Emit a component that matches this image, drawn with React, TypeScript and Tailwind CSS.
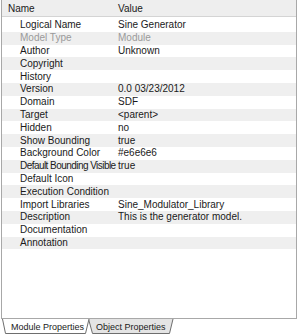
const ROWS: { name: string; value: string; muted?: boolean; tight?: boolean }[] = [
  { name: "Logical Name", value: "Sine Generator" },
  { name: "Model Type", value: "Module", muted: true },
  { name: "Author", value: "Unknown" },
  { name: "Copyright", value: "" },
  { name: "History", value: "" },
  { name: "Version", value: "0.0 03/23/2012" },
  { name: "Domain", value: "SDF" },
  { name: "Target", value: "<parent>" },
  { name: "Hidden", value: "no" },
  { name: "Show Bounding", value: "true" },
  { name: "Background Color", value: "#e6e6e6" },
  { name: "Default Bounding Visible", value: "true", tight: true },
  { name: "Default Icon", value: "" },
  { name: "Execution Condition", value: "" },
  { name: "Import Libraries", value: "Sine_Modulator_Library" },
  { name: "Description", value: "This is the generator model." },
  { name: "Documentation", value: "" },
  { name: "Annotation", value: "" },
];

export default function App() {
  return (
    <div className="w-[300px] h-[335px] bg-white text-[10px] leading-none text-[#1a1a1a] font-['Liberation_Sans',Arial,sans-serif] flex flex-col overflow-hidden">
      {/* Property grid */}
      <div className="ml-[1px] w-[296px] h-[319px] border-l border-r border-b border-[#a8a8a8] flex flex-col">
        {/* Header */}
        <div className="h-[17px] pt-[1px] flex items-center bg-[#eeeeee] border-b border-[#d4d4d4] shrink-0">
          <div className="w-[116px] pl-[6px]">Name</div>
          <div className="flex-1">Value</div>
        </div>
        <div className="h-[2px] shrink-0" />
        {ROWS.map((r, i) => (
          <div
            key={r.name}
            className={`h-[12.8px] flex items-center shrink-0 ${i % 2 === 1 ? "bg-[#efefef]" : "bg-white"} ${r.muted ? "text-[#9a9a9a]" : ""}`}
          >
            <div className={`w-[116px] pl-[18px] whitespace-nowrap ${r.tight ? "tracking-[-0.55px]" : ""}`}>{r.name}</div>
            <div className="flex-1 whitespace-nowrap">{r.value}</div>
          </div>
        ))}
      </div>

      {/* Tabs */}
      <div className="relative h-[15px] flex text-[9px]">
        <svg className="absolute inset-0" width="300" height="15" viewBox="0 0 300 15">
          <path d="M88.5 0 L92.5 14.5 L169.5 14.5 L173 0" fill="#e4e4e4" stroke="#6e6e6e" strokeWidth="1" />
          <path d="M2.5 0 L5.5 14.5 L85.5 14.5 L89 0" fill="#ffffff" stroke="#6e6e6e" strokeWidth="1" />
        </svg>
        <div className="relative pl-[11px] pt-[4px] w-[96px] whitespace-nowrap">Module Properties</div>
        <div className="relative pt-[4px] whitespace-nowrap">Object Properties</div>
      </div>
    </div>
  );
}
